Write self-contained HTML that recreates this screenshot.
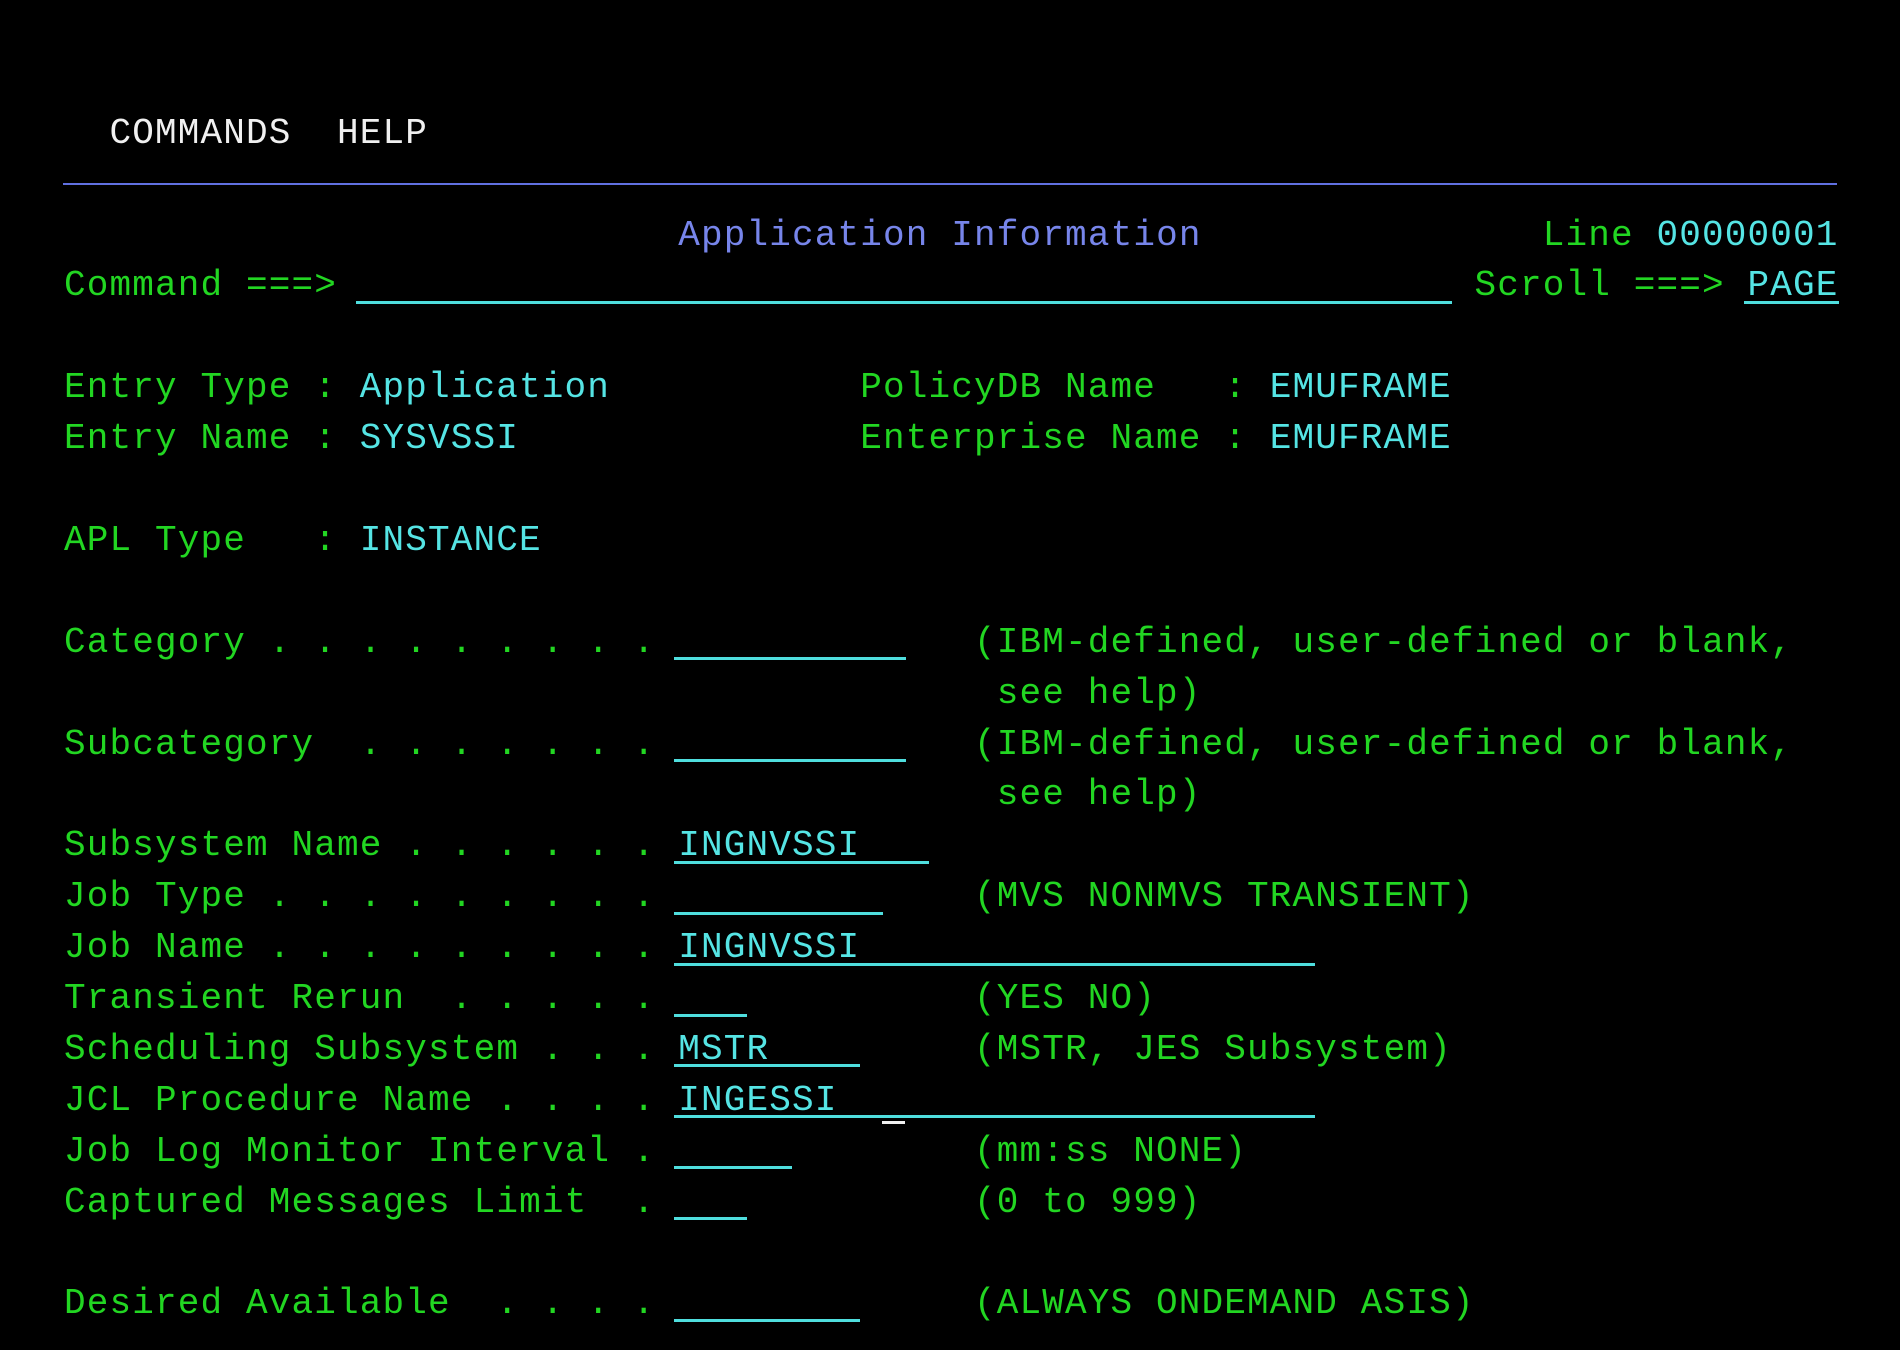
<!DOCTYPE html>
<html><head><meta charset="utf-8"><style>
html,body{margin:0;padding:0;background:#000;width:1900px;height:1350px;overflow:hidden}
body{position:relative;font-family:"Liberation Mono","DejaVu Sans Mono",monospace;font-size:36px;letter-spacing:1.15px}
.r{position:absolute;left:0;top:calc(209.5px + var(--r)*50.9px);height:51px;width:1900px;line-height:51px;color:#22d622}
.s{position:absolute;left:calc(64px + var(--c)*22.75px);top:0;white-space:pre}
.c{color:#55e4e4}.b{color:#7785ea}.w{color:#f0f0f0}
.u{position:absolute;left:calc(60px + var(--c)*22.75px);top:calc(250px + var(--r)*50.9px);width:calc(var(--w)*22.75px + 4px);height:3px;background:#4fdede}
</style></head><body>
<div class="r w" style="--r:-2"><span class="s" style="--c:2">COMMANDS</span><span class="s" style="--c:12">HELP</span></div>
<div style="position:absolute;left:63px;top:183px;width:1774px;height:2px;background:#6070e0"></div>
<div class="r" style="--r:0"><span class="s b" style="--c:27">Application Information</span><span class="s" style="--c:65">Line</span><span class="s c" style="--c:70">00000001</span></div>
<div class="r" style="--r:1"><span class="s" style="--c:0">Command ===></span><span class="s" style="--c:62">Scroll ===></span><span class="s c" style="--c:74">PAGE</span></div>
<div class="u" style="--r:1;--c:13;--w:48"></div>
<div class="u" style="--r:1;--c:74;--w:4"></div>
<div class="r" style="--r:3"><span class="s" style="--c:0">Entry Type :</span><span class="s c" style="--c:13">Application</span><span class="s" style="--c:35">PolicyDB Name</span><span class="s" style="--c:51">:</span><span class="s c" style="--c:53">EMUFRAME</span></div>
<div class="r" style="--r:4"><span class="s" style="--c:0">Entry Name :</span><span class="s c" style="--c:13">SYSVSSI</span><span class="s" style="--c:35">Enterprise Name</span><span class="s" style="--c:51">:</span><span class="s c" style="--c:53">EMUFRAME</span></div>
<div class="r" style="--r:6"><span class="s" style="--c:0">APL Type</span><span class="s" style="--c:11">:</span><span class="s c" style="--c:13">INSTANCE</span></div>
<div class="r" style="--r:8"><span class="s" style="--c:0">Category . . . . . . . . .</span><span class="s" style="--c:40">(IBM-defined, user-defined or blank,</span></div>
<div class="u" style="--r:8;--c:27;--w:10"></div>
<div class="r" style="--r:9"><span class="s" style="--c:41">see help)</span></div>
<div class="r" style="--r:10"><span class="s" style="--c:0">Subcategory  . . . . . . .</span><span class="s" style="--c:40">(IBM-defined, user-defined or blank,</span></div>
<div class="u" style="--r:10;--c:27;--w:10"></div>
<div class="r" style="--r:11"><span class="s" style="--c:41">see help)</span></div>
<div class="r" style="--r:12"><span class="s" style="--c:0">Subsystem Name . . . . . .</span><span class="s c" style="--c:27">INGNVSSI</span></div>
<div class="u" style="--r:12;--c:27;--w:11"></div>
<div class="r" style="--r:13"><span class="s" style="--c:0">Job Type . . . . . . . . .</span><span class="s" style="--c:40">(MVS NONMVS TRANSIENT)</span></div>
<div class="u" style="--r:13;--c:27;--w:9"></div>
<div class="r" style="--r:14"><span class="s" style="--c:0">Job Name . . . . . . . . .</span><span class="s c" style="--c:27">INGNVSSI</span></div>
<div class="u" style="--r:14;--c:27;--w:28"></div>
<div class="r" style="--r:15"><span class="s" style="--c:0">Transient Rerun  . . . . .</span><span class="s" style="--c:40">(YES NO)</span></div>
<div class="u" style="--r:15;--c:27;--w:3"></div>
<div class="r" style="--r:16"><span class="s" style="--c:0">Scheduling Subsystem . . .</span><span class="s c" style="--c:27">MSTR</span><span class="s" style="--c:40">(MSTR, JES Subsystem)</span></div>
<div class="u" style="--r:16;--c:27;--w:8"></div>
<div class="r" style="--r:17"><span class="s" style="--c:0">JCL Procedure Name . . . .</span><span class="s c" style="--c:27">INGESSI</span></div>
<div class="u" style="--r:17;--c:27;--w:28"></div>
<div style="position:absolute;left:882px;top:1121px;width:23px;height:3px;background:#f0f0f0"></div>
<div class="r" style="--r:18"><span class="s" style="--c:0">Job Log Monitor Interval .</span><span class="s" style="--c:40">(mm:ss NONE)</span></div>
<div class="u" style="--r:18;--c:27;--w:5"></div>
<div class="r" style="--r:19"><span class="s" style="--c:0">Captured Messages Limit  .</span><span class="s" style="--c:40">(0 to 999)</span></div>
<div class="u" style="--r:19;--c:27;--w:3"></div>
<div class="r" style="--r:21"><span class="s" style="--c:0">Desired Available  . . . .</span><span class="s" style="--c:40">(ALWAYS ONDEMAND ASIS)</span></div>
<div class="u" style="--r:21;--c:27;--w:8"></div>
</body></html>
